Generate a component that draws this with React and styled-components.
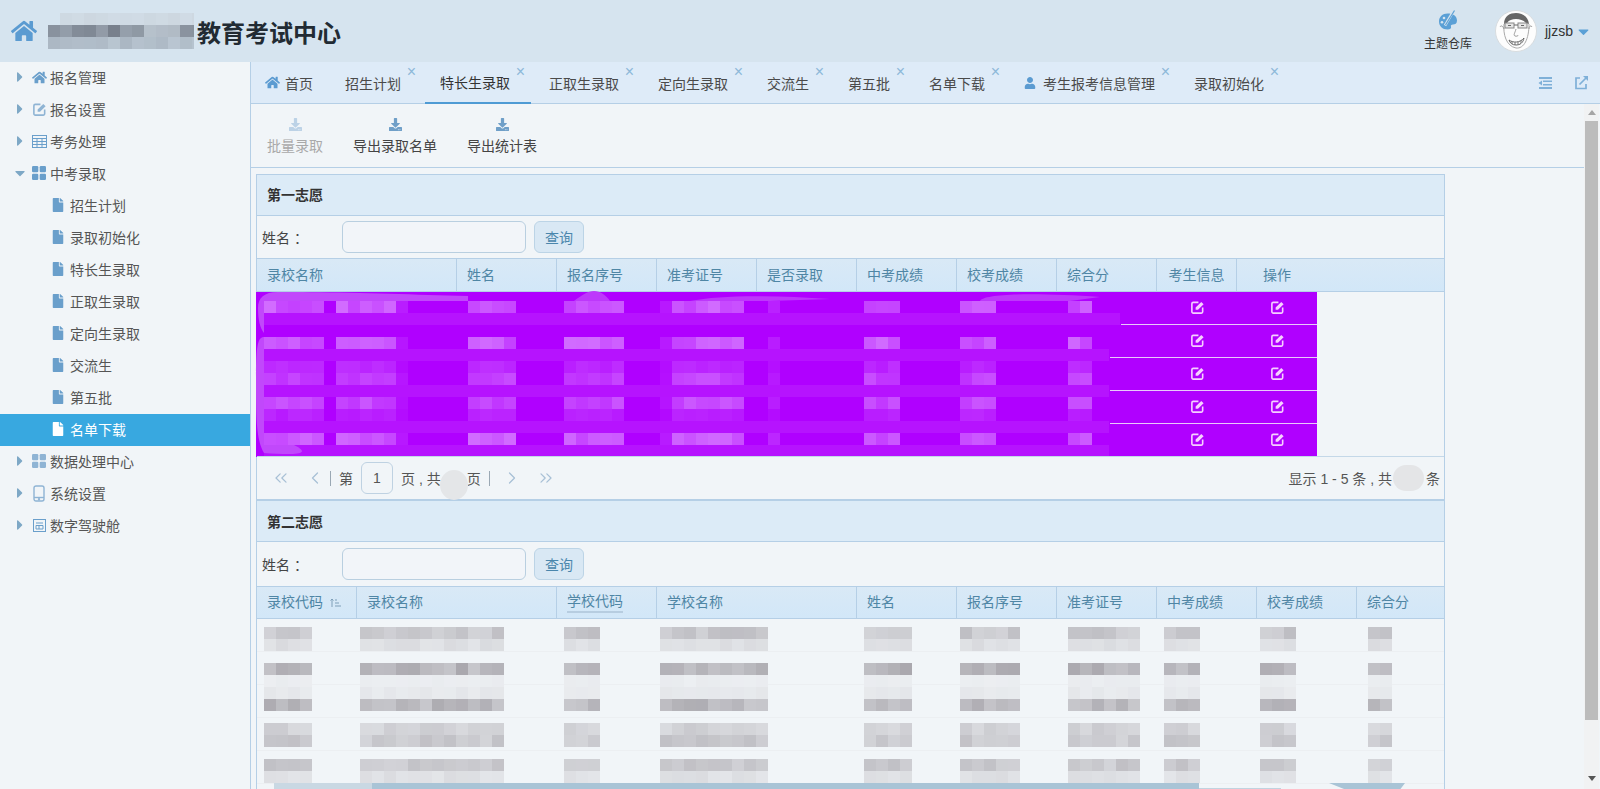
import React from 'react'
import styled, { createGlobalStyle } from 'styled-components'
import { FaHome, FaFile, FaUser, FaDownload, FaCaretRight, FaCaretDown } from 'react-icons/fa'
import { ChevronLeft, ChevronRight, ChevronsLeft, ChevronsRight } from 'lucide-react'

const GlobalStyle = createGlobalStyle`
  html, body { margin: 0; padding: 0; height: 789px; overflow: hidden; background: #f1f5f8; }
  body { font-family: "Liberation Sans", "Noto Sans CJK SC", sans-serif; font-size: 14px; color: #444; }
  * { box-sizing: border-box; }
`

const BLUE = '#6a9fcb'

/* little drawings that the icon packs do not have in the right shape */
const EditIcon = ({ size = 16, color = BLUE }) => (
  <svg width={size} height={size} viewBox="0 0 16 16" fill="none">
    <path d="M9 2.500H3.500a1.500 1.500 0 0 0-1.500 1.500v8.500A1.500 1.500 0 0 0 3.500 14H12a1.500 1.500 0 0 0 1.500-1.500V8" stroke={color} strokeWidth="1.700" />
    <path d="M6 10.500V8l6-6 2.500 2.500-6 6z" fill={color} />
  </svg>
)

const GridIcon = ({ color = BLUE }) => (
  <svg width="14" height="14" viewBox="0 0 14 14" fill={color}>
    <rect x="0" y="0" width="6.300" height="6.300" rx="1.200" />
    <rect x="7.700" y="0" width="6.300" height="6.300" rx="1.200" />
    <rect x="0" y="7.700" width="6.300" height="6.300" rx="1.200" />
    <rect x="7.700" y="7.700" width="6.300" height="6.300" rx="1.200" />
  </svg>
)

const TableIcon = () => (
  <svg width="15" height="13" viewBox="0 0 15 13" fill="none" stroke={BLUE} strokeWidth="1">
    <rect x="0.5" y="0.5" width="14" height="12" />
    <path d="M0.500 3.500h14M0.500 6.500h14M0.500 9.500h14M5 3.500v9M10 3.500v9" />
  </svg>
)

const PhoneIcon = () => (
  <svg width="12" height="17" viewBox="0 0 12 17" fill="none" stroke="#8fb4d4" strokeWidth="1.400">
    <rect x="1" y="1" width="10" height="15" rx="2" />
    <path d="M1 12.500h10" />
    <circle cx="6" cy="14.300" r="0.500" />
  </svg>
)

const BoardIcon = () => (
  <svg width="13" height="13" viewBox="0 0 13 13" fill="none" stroke={BLUE} strokeWidth="1">
    <rect x="0.500" y="0.500" width="12" height="12" />
    <path d="M3 4h7M3 6.500h7v3.500H3zM6 6.500v3.500" />
  </svg>
)

const OutdentIcon = () => (
  <svg width="15" height="14" viewBox="0 0 15 14" fill="#7fb0d8">
    <rect x="1" y="1" width="13" height="2" />
    <rect x="5" y="4.500" width="9" height="1.500" />
    <rect x="5" y="8" width="9" height="1.500" />
    <rect x="1" y="11" width="13" height="2" />
    <path d="M4 4.500v5L0.500 7z" />
  </svg>
)

const ExternalIcon = () => (
  <svg width="15" height="15" viewBox="0 0 15 15" fill="none" stroke="#7fb0d8" strokeWidth="1.700">
    <path d="M6 3H2v10.500h10V9" />
    <path d="M5.500 9.500 13 2" />
    <path d="M9 1h5v5z" fill="#7fb0d8" stroke="none" />
  </svg>
)

const SortIcon = () => (
  <svg width="11" height="10" viewBox="0 0 11 10" fill="none" stroke="#7f9fb8" strokeWidth="1">
    <path d="M2 9V1M0.500 2.500 2 1l1.500 1.500M5 2h2M5 5h4M5 8h6" />
  </svg>
)

const PaletteIcon = () => (
  <svg width="20" height="22" viewBox="0 0 20 22">
    <path d="M9.500 3.500c5.500 0 9.500 2.500 9.500 7 0 3-2 4-4 4-1.800 0-2.500 1-2 2.200.5 1.300-.8 2.800-3.500 2.800C4.500 19.500 1 16 1 11.500S4.500 3.500 9.500 3.500z" fill="#5ba0d6" />
    <path d="M16 0 7 15.500" stroke="#d6e4ef" strokeWidth="2.600" />
    <path d="M16.500 .5 7.500 15" stroke="#5ba0d6" strokeWidth="1.200" />
    <circle cx="6" cy="8" r="1.300" fill="#d6e4ef" />
    <circle cx="4" cy="12.300" r="1.300" fill="#d6e4ef" />
  </svg>
)

const AvatarFace = () => (
  <svg width="42" height="42" viewBox="0 0 42 42">
    <circle cx="21" cy="21" r="20.500" fill="#fdfdfd" stroke="#d8dcdf" />
    <path d="M9 14c0-8 6-11 12-11s12 3 13 11l-3-1c-3-3-6-4-10-4s-7 1-9 4z" fill="#666" />
    <path d="M9 14c-1 10 2 22 12 24 8 1 13-9 13-24" fill="none" stroke="#aaa" strokeWidth="1" />
    <path d="M5 17c1-2 3-1 4 2M37 17c-1-2-3-1-3 2" fill="none" stroke="#999" strokeWidth="1" />
    <rect x="10" y="13" width="9" height="5" fill="#e6e6e6" stroke="#888" strokeWidth="1" />
    <rect x="23" y="13" width="9" height="5" fill="#e6e6e6" stroke="#888" strokeWidth="1" />
    <path d="M19 15h4M13 15.500h3M26 15.500h3" stroke="#666" strokeWidth="1" />
    <path d="M21 19c-1 4-3 6-1 7 2 .5 3 0 3-1" fill="none" stroke="#999" strokeWidth="1" />
    <path d="M14 30c4 3 11 3 15-2-1 5-4 7-8 7s-6-2-7-5z" fill="#fff" stroke="#666" strokeWidth="1" />
    <path d="M17 31v3M20 32v3M23 32v3M26 30v3" stroke="#777" strokeWidth="1" />
  </svg>
)

/* the page has pixelated patches where data was hidden: drawn in page coordinates */
const noise = (x, y) => {
  const v = Math.sin(x * 12.9898 + y * 78.233) * 43758.5453
  return v - Math.floor(v)
}

const mix = (a, b, t) => {
  const c = a.map((v, i) => Math.round(v + (b[i] - v) * t))
  return `rgb(${c[0]},${c[1]},${c[2]})`
}

const Mosaic = ({ box, rows, segs, from, to, children }) => (
  <MosaicSvg width={box[2]} height={box[3]} viewBox={box.join(' ')}>
    {children}
    {rows.map(([y, power]) =>
      segs.flatMap(([x0, x1, factor = 1]) => {
        const cells = []
        for (let x = x0; x < x1; x += 12) {
          const t = power * factor * (0.6 + 0.4 * noise(x, y))
          cells.push(<rect key={`${x}-${y}`} x={x} y={y} width="12" height="12" fill={mix(from, to, t)} />)
        }
        return cells
      })
    )}
  </MosaicSvg>
)

const MosaicSvg = styled.svg`
  position: absolute;
  left: -1px;
  top: 0;
  overflow: visible;
`

const Page = styled.div`
  width: 1600px;
  height: 789px;
  overflow: hidden;
  position: relative;
`

const TopBar = styled.header`
  height: 62px;
  background: #d6e4ef;
  display: flex;
  align-items: center;
  padding-left: 11px;
  color: #5b9bd1;
`

const LogoBlur = styled.svg`
  margin-left: 11px;
  flex-shrink: 0;
`

const SiteTitle = styled.h1`
  margin: 0 0 0 3px;
  font-size: 24px;
  font-weight: 700;
  color: #222b33;
`

const TopRight = styled.div`
  margin-left: auto;
  display: flex;
  align-items: center;
  padding-right: 8px;
`

const ThemeLink = styled.div`
  display: flex;
  flex-direction: column;
  align-items: center;
  font-size: 12px;
  line-height: 14px;
  color: #333;
  margin-right: 23px;
  margin-top: -1px;
  svg { margin-bottom: 5px; }
`

const UserName = styled.span`
  margin-left: 8px;
  color: #333;
  font-size: 14px;
`

const UserCaret = styled.span`
  display: flex;
  margin-left: 2px;
  color: #5ba0d6;
`

const Body = styled.div`
  display: flex;
  height: 727px;
`

const Sidebar = styled.nav`
  width: 250px;
  flex-shrink: 0;
`

const NavRow = styled.div`
  height: 32px;
  display: flex;
  align-items: center;
  padding-bottom: 2px;
  padding-left: ${p => (p.$sub ? '52px' : '12px')};
  background: ${p => (p.$active ? '#38a8e0' : 'transparent')};
  color: ${p => (p.$active ? '#fff' : '#555')};
`

const NavCaret = styled.span`
  display: flex;
  width: 19px;
  color: #7ea8c6;
`

const NavIcon = styled.span`
  display: flex;
  justify-content: center;
  width: 16px;
  margin-right: 3px;
  color: ${p => (p.$active ? '#fff' : BLUE)};
`

const SubIcon = styled(NavIcon)`
  width: 12px;
  margin-right: 6px;
`

const Main = styled.main`
  width: 1350px;
  border-left: 1px solid #b5cfe6;
  position: relative;
`

const TabBar = styled.div`
  height: 42px;
  background: #deebf8;
  border-bottom: 1px solid #b5cfe6;
  display: flex;
`

const Tab = styled.div`
  position: relative;
  height: 42px;
  display: flex;
  align-items: center;
  padding: ${p => (p.$plain ? '0 14px 1px 14px' : '0 21px 1px 15px')};
  margin-right: 3px;
  color: ${p => (p.$active ? '#333' : '#4a4a4a')};
  border-bottom: ${p => (p.$active ? '2px solid #4f9bd4' : 'none')};
  svg { color: #5b9bd1; margin-right: 5px; }
`

const TabIconUser = styled(FaUser)`
  width: 12px;
  margin-right: 7px !important;
`

const TabClose = styled.span`
  position: absolute;
  right: 6px;
  top: 2px;
  font-size: 16px;
  line-height: 16px;
  color: #8db8d8;
`

const TabTools = styled.div`
  margin-left: auto;
  display: flex;
  align-items: center;
  gap: 21px;
  padding-right: 11px;
`

const Toolbar = styled.div`
  height: 64px;
  display: flex;
  padding-left: 6px;
  width: 1334px;
  border-bottom: 1px solid #b5cfe6;
`

const ToolButton = styled.div`
  display: flex;
  flex-direction: column;
  align-items: center;
  padding: 13px 10px 0;
  margin-right: 10px;
  color: ${p => (p.$off ? '#a9a9a9' : '#444')};
  line-height: 20px;
  svg { color: ${p => (p.$off ? '#bcd2e6' : '#6f9fc8')}; margin: 1px 0 5px; }
`

const Panel = styled.section`
  margin: 6px 0 0 5px;
  width: 1189px;
  border: 1px solid #b5cfe6;
  border-bottom: none;
`

const PanelTitle = styled.div`
  height: 41px;
  padding: 0 0 ${p => (p.$low ? '0' : '2px')} 10px;
  display: flex;
  align-items: center;
  background: #dcebf7;
  border-bottom: 1px solid #b5cfe6;
  font-size: 14px;
  font-weight: 700;
  color: #333;
`

const SearchRow = styled.div`
  height: ${p => p.$h}px;
  display: flex;
  align-items: center;
  padding-left: 5px;
`

const SearchLabel = styled.span`
  width: 80px;
  color: #444;
`

const SearchInput = styled.input`
  width: 184px;
  height: 32px;
  border: 1px solid #b9cfe0;
  border-radius: 6px;
  background: #f2f5f9;
`

const SearchButton = styled.button`
  width: 50px;
  height: 32px;
  margin-left: 8px;
  border: 1px solid #bcd4e6;
  border-radius: 6px;
  background: #d9e8f4;
  color: #4a86ac;
  font: inherit;
  padding: 0;
`

const HeadRow = styled.div`
  height: ${p => p.$h}px;
  display: flex;
  background: linear-gradient(#d9e9f6, #d2e7f8);
  border-top: 1px solid #b5cfe6;
  border-bottom: 1px solid #b5cfe6;
`

const HeadCell = styled.div`
  width: ${p => p.$w}px;
  display: flex;
  align-items: center;
  justify-content: ${p => (p.$center ? 'center' : 'flex-start')};
  padding-left: ${p => (p.$center ? '0' : '10px')};
  color: #4f86a5;
  border-right: ${p => (p.$last ? 'none' : '1px solid #b5cfe6')};
  svg { margin-left: 7px; }
`

const HeadLabel = styled.span`
  border-bottom: ${p => (p.$under ? '2px solid #b7cde0' : 'none')};
  line-height: 19px;
`

const GridBody = styled.div`
  position: relative;
  height: ${p => p.$h}px;
`

const PurpleRows = styled.div`
  position: absolute;
  left: 0;
  top: 0;
  width: 1060px;
  height: 164px;
  background: #b000ff;
`

const PurpleRow = styled.div`
  height: 33px;
  padding-bottom: 1px;
  border-bottom: 1px solid #e9c8fb;
  display: flex;
  align-items: center;
  justify-content: flex-end;
  &:last-child { border-bottom: none; height: 32px; }
`

const ActionCell = styled.span`
  width: 80px;
  display: flex;
  justify-content: center;
`

const PaintRows = styled.div`
  position: absolute;
  left: 0;
  top: 0;
  width: 100%;
`

const PaintRow = styled.div`
  height: 33px;
  border-bottom: 1px solid #eceff2;
`

const Pager = styled.div`
  height: 45px;
  display: flex;
  align-items: center;
  border-top: 1px solid #c4d8e8;
  border-bottom: 2px solid #b5cfe6;
  position: relative;
  color: #555;
`

const PagerArrow = styled.span`
  display: flex;
  width: ${p => p.$w}px;
  justify-content: center;
  color: #a8c0d6;
`

const PagerBar = styled.span`
  width: 1px;
  height: 15px;
  background: #9aa8b4;
  margin: 0 8px 0 ${p => p.$left || 8}px;
`

const PageInput = styled.span`
  width: 32px;
  height: 32px;
  margin: 0 8px;
  border: 1px solid #bfd2e2;
  border-radius: 6px;
  display: flex;
  align-items: center;
  justify-content: center;
`

const SmudgeDisc = styled.span`
  position: absolute;
  left: 183px;
  top: 13px;
  width: 28px;
  height: 30px;
  border-radius: 50%;
  background: #e4e6e8;
`

const PageBlank = styled.span`
  width: 26px;
`

const PagerInfo = styled.span`
  margin-left: auto;
  padding-right: 4px;
  display: flex;
  align-items: center;
`

const InfoBlob = styled.span`
  width: 31px;
  height: 26px;
  border-radius: 13px;
  background: #e4e5e7;
  margin: 0 2px 0 1px;
`

const ScrollTrack = styled.div`
  position: absolute;
  right: 1px;
  top: 42px;
  width: 15px;
  height: 685px;
  background: #f1f2f3;
  display: flex;
  flex-direction: column;
  align-items: center;
`

const ScrollThumb = styled.div`
  width: 13px;
  height: 599px;
  margin-top: 17px;
  background: #bcbcbc;
`

const ScrollUp = styled.span`
  position: absolute;
  top: 6px;
  border: 4px solid transparent;
  border-top: none;
  border-bottom: 5px solid #a5a5a5;
`

const ScrollDown = styled.span`
  position: absolute;
  bottom: 8px;
  border: 4px solid transparent;
  border-bottom: none;
  border-top: 5px solid #555;
`

const menu = [
  { label: '报名管理', icon: <FaHome size={15} /> },
  { label: '报名设置', icon: <EditIcon size={15} color="#8fb4d4" /> },
  { label: '考务处理', icon: <TableIcon /> },
  { label: '中考录取', icon: <GridIcon />, open: true },
  { label: '招生计划', sub: true },
  { label: '录取初始化', sub: true },
  { label: '特长生录取', sub: true },
  { label: '正取生录取', sub: true },
  { label: '定向生录取', sub: true },
  { label: '交流生', sub: true },
  { label: '第五批', sub: true },
  { label: '名单下载', sub: true, active: true },
  { label: '数据处理中心', icon: <GridIcon color="#8fb4d4" /> },
  { label: '系统设置', icon: <PhoneIcon /> },
  { label: '数字驾驶舱', icon: <BoardIcon /> },
]

const tabs = [
  { label: '招生计划' },
  { label: '特长生录取', active: true },
  { label: '正取生录取' },
  { label: '定向生录取' },
  { label: '交流生' },
  { label: '第五批' },
  { label: '名单下载' },
  { label: '考生报考信息管理', user: true },
  { label: '录取初始化' },
]

const firstCols = [
  ['录校名称', 200], ['姓名', 100], ['报名序号', 100], ['准考证号', 100], ['是否录取', 100],
  ['中考成绩', 100], ['校考成绩', 100], ['综合分', 100], ['考生信息', 80, true], ['操作', 80, true, true],
]

const secondCols = [
  ['录校代码', 100], ['录校名称', 200], ['学校代码', 100], ['学校名称', 200], ['姓名', 100],
  ['报名序号', 100], ['准考证号', 100], ['中考成绩', 100], ['校考成绩', 100], ['综合分', 87, false, true],
]

const purpleSegs = [
  [264, 324], [336, 396], [396, 408, 0.3], [468, 516], [564, 624], [660, 672, 0.3],
  [672, 744], [768, 780, 0.4], [864, 900], [960, 996], [1068, 1092],
]
const purpleLines = [[301, 0.8], [337, 0.8], [361, 0.35], [373, 0.6], [397, 0.65], [409, 0.3], [433, 0.8]]
const greySegs = [[264, 312], [360, 504], [564, 600], [660, 768], [864, 912], [960, 1020], [1068, 1140], [1164, 1200], [1260, 1296], [1368, 1392]]
const greyLines = [[625, 0.72], [637, 0.35], [661, 1], [673, 0.12], [685, 0.18], [697, 0.95], [721, 0.55], [733, 0.68], [757, 0.68], [769, 0.32]]

const logoRows = [
  [13, 60, 193, [205, 215, 224]],
  [25, 48, 193, [118, 126, 138]],
  [37, 48, 193, [170, 182, 194]],
]

const logoTone = (x, y, c) => {
  if (y === 25 && x >= 144 && x < 180) return [176, 186, 196]
  return c
}

const Logo = () => (
  <LogoBlur width="146" height="36" viewBox="48 13 146 36">
    {logoRows.map(([y, x0, x1, c]) => {
      const cells = []
      for (let x = x0; x < x1; x += 12) {
        cells.push(<rect key={`${x}-${y}`} x={x} y={y} width="12.500" height="12" fill={mix(logoTone(x, y, c), [214, 228, 239], noise(x, y) * 0.35)} />)
      }
      return cells
    })}
  </LogoBlur>
)

const Head = ({ cols, h, sort }) => (
  <HeadRow $h={h}>
    {cols.map(([label, w, center, last], i) => (
      <HeadCell key={label + i} $w={w} $center={center} $last={last}>
        <HeadLabel $under={sort && label === '学校代码'}>{label}</HeadLabel>
        {sort && i === 0 && <SortIcon />}
      </HeadCell>
    ))}
  </HeadRow>
)

export default function App() {
  return (
    <Page>
      <GlobalStyle />
      <TopBar>
        <FaHome size={26} />
        <Logo />
        <SiteTitle>教育考试中心</SiteTitle>
        <TopRight>
          <ThemeLink>
            <PaletteIcon />
            <span>主题仓库</span>
          </ThemeLink>
          <AvatarFace />
          <UserName>jjzsb</UserName>
          <UserCaret><FaCaretDown size={17} /></UserCaret>
        </TopRight>
      </TopBar>
      <Body>
        <Sidebar>
          {menu.map(item => (
            <NavRow key={item.label} $sub={item.sub} $active={item.active}>
              {item.sub ? (
                <SubIcon $active={item.active}><FaFile size={14} /></SubIcon>
              ) : (
                <>
                  <NavCaret>{item.open ? <FaCaretDown size={16} /> : <FaCaretRight size={16} />}</NavCaret>
                  <NavIcon>{item.icon}</NavIcon>
                </>
              )}
              <span>{item.label}</span>
            </NavRow>
          ))}
        </Sidebar>
        <Main>
          <TabBar>
            <Tab $plain>
              <FaHome size={15} />
              首页
            </Tab>
            {tabs.map(t => (
              <Tab key={t.label} $active={t.active}>
                {t.user && <TabIconUser size={12} />}
                {t.label}
                <TabClose>×</TabClose>
              </Tab>
            ))}
            <TabTools>
              <OutdentIcon />
              <ExternalIcon />
            </TabTools>
          </TabBar>
          <Toolbar>
            <ToolButton $off><FaDownload size={13} />批量录取</ToolButton>
            <ToolButton><FaDownload size={13} />导出录取名单</ToolButton>
            <ToolButton><FaDownload size={13} />导出统计表</ToolButton>
          </Toolbar>
          <Panel>
            <PanelTitle>第一志愿</PanelTitle>
            <SearchRow $h={42}>
              <SearchLabel>姓名 ：</SearchLabel>
              <SearchInput />
              <SearchButton>查询</SearchButton>
            </SearchRow>
            <Head cols={firstCols} h={34} />
            <GridBody $h={164}>
              <PurpleRows>
                {[0, 1, 2, 3, 4].map(i => (
                  <PurpleRow key={i}>
                    <ActionCell><EditIcon size={15} color="#f6d0ff" /></ActionCell>
                    <ActionCell><EditIcon size={15} color="#f6d0ff" /></ActionCell>
                  </PurpleRow>
                ))}
              </PurpleRows>
              <Mosaic box={[256, 292, 1061, 164]} rows={purpleLines} segs={purpleSegs} from={[176, 0, 255]} to={[218, 135, 255]}>
                <path d="M256 292h865v33h-11v132H256z" fill="#b000ff" />
                <path d="M264 313h856v12H264zM264 349h845v12H264zM264 385h845v12H264zM264 421h845v12H264zM264 445h845v12H264z" fill="#b613fe" />
                <path d="M468 301v-5l-40-1c-50-2-110-3-150-3-14 0-20 6-20 16 0 12 2 20 6 25v-32zM264 337c-6 0-8 8-8 40 0 40 0 62 8 76 30 2 50 2 30-8h-30z" fill="#c148fb" />
                <path d="M574 301c8-6 14-10 20-10s12 4 16 10zM690 301c30-6 80-6 140-2l-60 2zM980 301c4-8 60-8 120-4l-30 4z" fill="#bd38fb" />
              </Mosaic>
            </GridBody>
            <Pager>
              <PagerArrow $w={48}><ChevronsLeft size={20} strokeWidth={1.500} /></PagerArrow>
              <PagerArrow $w={20}><ChevronLeft size={20} strokeWidth={1.500} /></PagerArrow>
              <PagerBar $left={5} />
              第
              <PageInput>1</PageInput>
              页 , 共
              <PageBlank />
              页
              <PagerBar />
              <PagerArrow $w={28}><ChevronRight size={20} strokeWidth={1.500} /></PagerArrow>
              <PagerArrow $w={40}><ChevronsRight size={20} strokeWidth={1.500} /></PagerArrow>
              <SmudgeDisc />
              <PagerInfo>
                显示 1 - 5 条 , 共<InfoBlob />条
              </PagerInfo>
            </Pager>
            <PanelTitle $low>第二志愿</PanelTitle>
            <SearchRow $h={44}>
              <SearchLabel>姓名 ：</SearchLabel>
              <SearchInput />
              <SearchButton>查询</SearchButton>
            </SearchRow>
            <Head cols={secondCols} h={33} sort />
            <GridBody $h={171}>
              <PaintRows>
                {[0, 1, 2, 3, 4].map(i => <PaintRow key={i} />)}
              </PaintRows>
              <Mosaic box={[256, 617, 1189, 172]} rows={greyLines} segs={greySegs} from={[241, 244, 247]} to={[170, 168, 174]}>
                <path d="M274 781h98v8h-98z" fill="#c9d8e3" />
                <path d="M372 781h827v8H372z" fill="#a9c4d6" />
                <path d="M1199 786h82v3h-82z" fill="#c0d3e0" />
                <path d="M1329 781h76l-6 8h-50z" fill="#a9c4d6" />
              </Mosaic>
            </GridBody>
          </Panel>
          <ScrollTrack>
            <ScrollUp />
            <ScrollThumb />
            <ScrollDown />
          </ScrollTrack>
        </Main>
      </Body>
    </Page>
  )
}
